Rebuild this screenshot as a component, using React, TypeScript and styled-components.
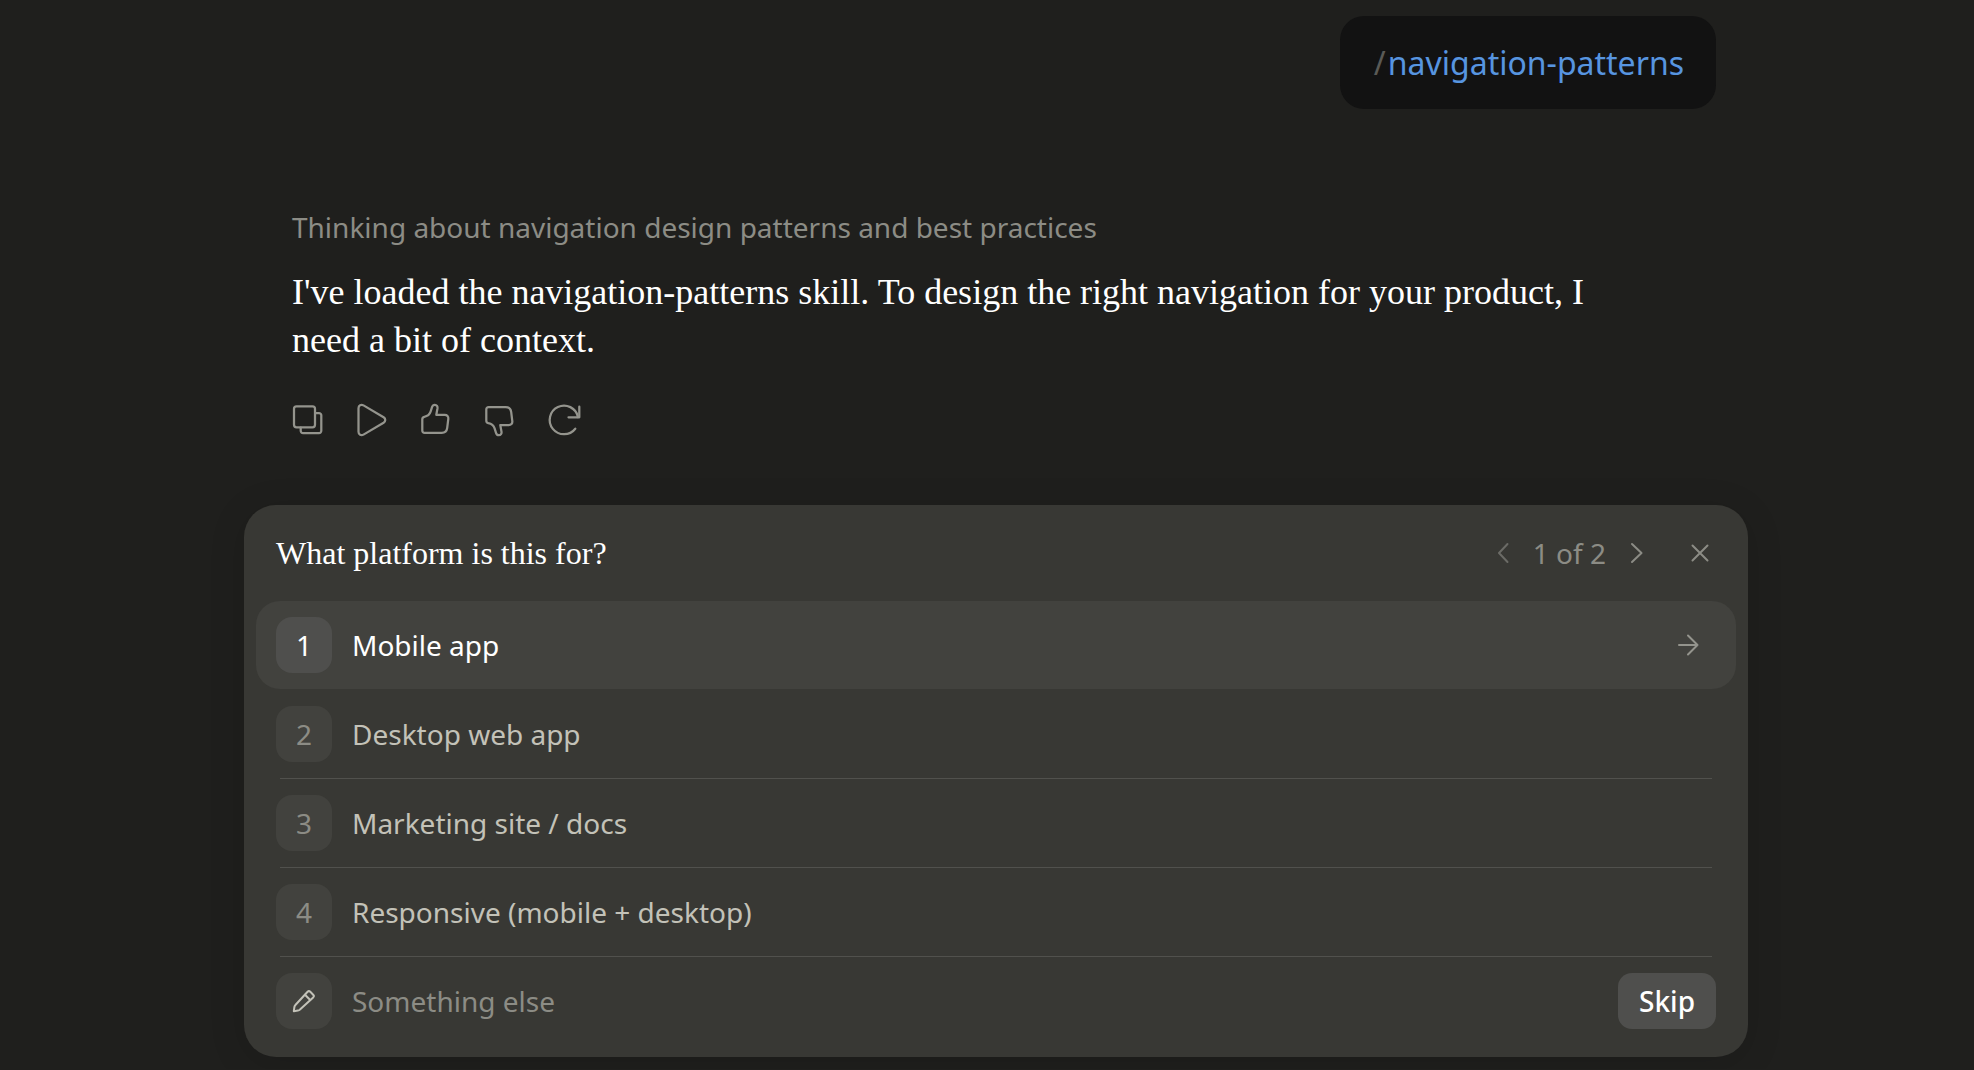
import React, { useState } from "react";
import styled, { createGlobalStyle, css } from "styled-components";

const color = {
  page: "#1f1f1d",
  bubble: "#121212",
  card: "#383834",
  raised: "#42423e",
  strong: "#4f4f4d",
  line: "#51514d",
  text: "#ffffff",
  label: "#c3c2b8",
  muted: "#8c8c85",
  faint: "#6b6b66",
  link: "#5795e0",
};

const sans = `"Noto Sans", "Liberation Sans", sans-serif`;
const serif = `"Liberation Serif", "Times New Roman", serif`;

const GlobalStyle = createGlobalStyle`
  *, *::before, *::after { box-sizing: border-box; }
  body {
    margin: 0;
    background: ${color.page};
    color: ${color.text};
    font: 28px/40px ${sans};
    overflow-x: hidden;
  }
  button, input { font: inherit; color: inherit; }
`;

const Page = styled.main`
  display: flex;
  justify-content: center;
  padding: 16px 0 12px 18px;
`;

const Column = styled.div`
  display: flex;
  flex-direction: column;
  width: 100%;
  max-width: 1504px;
`;

const Thread = styled.section`
  display: flex;
  flex-direction: column;
  padding: 0 32px 0 48px;
`;

const UserBubble = styled.div`
  display: flex;
  align-self: flex-end;
  gap: 2px;
  padding: 24px 32px 24px 34px;
  border-radius: 24px;
  background: ${color.bubble};
  font-size: 32px;
  line-height: 45px;
`;

const Slash = styled.span`
  color: #5a5a56;
`;

const Command = styled.a`
  color: ${color.link};
  text-decoration: none;
`;

const Reply = styled.article`
  display: flex;
  flex-direction: column;
  gap: 21px;
  margin-top: 98px;
`;

const Thinking = styled.p`
  margin: 0;
  color: ${color.muted};
`;

const ReplyText = styled.p`
  margin: 0;
  padding-right: 80px;
  font: 36px/48px ${serif};
`;

const Actions = styled.div`
  display: flex;
  gap: 32px;
  margin-top: 19px;
`;

const Glyph = styled.svg<{ $size: number }>`
  display: block;
  width: ${(p) => p.$size}px;
  height: ${(p) => p.$size}px;
  fill: none;
  stroke: currentColor;
  stroke-width: 2;
  stroke-linecap: round;
  stroke-linejoin: round;
  overflow: visible;
`;

const IconButton = styled.button<{ $dim?: boolean }>`
  display: flex;
  padding: 0;
  border: 0;
  background: none;
  color: ${(p) => (p.$dim ? color.faint : color.muted)};
  cursor: pointer;
`;

const ActionButton = styled(IconButton)`
  color: #94948d;

  ${Glyph} {
    stroke-width: 2.25;
  }
`;

const Card = styled.section`
  margin-top: 69px;
  padding: 0 12px 12px;
  border-radius: 32px;
  background: ${color.card};
  box-shadow: 0 6px 36px rgba(0, 0, 0, 0.13);
`;

const CardHeader = styled.header`
  display: flex;
  align-items: center;
  justify-content: space-between;
  height: 96px;
  padding: 0 20px;
`;

const Question = styled.h2`
  margin: 0;
  font: 32px/40px ${serif};
`;

const HeaderControls = styled.div`
  display: flex;
  align-items: center;
  gap: 36px;
`;

const Pager = styled.nav`
  display: flex;
  align-items: center;
  gap: 18px;
  color: ${color.muted};
`;

const Options = styled.ul`
  margin: 0;
  padding: 0;
  list-style: none;
`;

const Option = styled.li<{ $divided?: boolean }>`
  &:not(:last-child)::after {
    content: "";
    display: block;
    height: 1px;
    margin: 0 24px;
    background: ${(p) => (p.$divided ? color.line : "transparent")};
  }
`;

const rowLayout = css`
  display: flex;
  align-items: center;
  gap: 20px;
  width: 100%;
  height: 88px;
`;

const Choice = styled.button<{ $active: boolean }>`
  ${rowLayout}
  padding: 0 36px 0 20px;
  border: 0;
  border-radius: 24px;
  background: ${(p) => (p.$active ? color.raised : "transparent")};
  color: ${(p) => (p.$active ? color.text : color.label)};
  text-align: left;
  cursor: pointer;
`;

const CustomRow = styled.div`
  ${rowLayout}
  padding: 0 20px;
`;

const Badge = styled.span<{ $active?: boolean }>`
  display: flex;
  flex: none;
  align-items: center;
  justify-content: center;
  width: 56px;
  height: 56px;
  border-radius: 16px;
  background: ${(p) => (p.$active ? color.strong : color.raised)};
  color: ${(p) => (p.$active ? color.text : color.muted)};
`;

const PencilBadge = styled(Badge).attrs({ as: "label" })`
  color: ${color.label};
`;

const ChoiceText = styled.span`
  flex: 1;
`;

const Trailing = styled.span`
  color: #94948d;
`;

const CustomInput = styled.input`
  flex: 1;
  min-width: 0;
  height: 40px;
  padding: 0;
  border: 0;
  outline: 0;
  background: none;
  &::placeholder {
    color: ${color.muted};
    opacity: 1;
  }
`;

const SkipButton = styled.button`
  height: 56px;
  padding: 0 21px;
  border: 0;
  border-radius: 14px;
  background: ${color.strong};
  font-weight: 500;
  cursor: pointer;
`;

type IconProps = { size: number; children: React.ReactNode };

const Icon = ({ size, children }: IconProps) => (
  <Glyph $size={size} viewBox={`0 0 ${size} ${size}`} aria-hidden="true">
    {children}
  </Glyph>
);

const thumb =
  "M2.3 15.3c0-1.4.8-2.2 2-2.5 3.4-.6 5.4-2.4 6.3-5.1l1.5-4.8C12.6 1.4 13.5.8 14.8.8c2 0 3 1.6 2.7 3.5l-1.2 6.500h8.400c2.400 0 3.900 1.600 3.600 4l-1.100 9.100c-.4 3.200-2.400 5-5.500 5H4.600c-1.400 0-2.300-.9-2.300-2.300z";

const actions = [
  {
    name: "Copy",
    art: (
      <>
        <rect x="2" y="2.3" width="21" height="21" rx="2.5" />
        <path d="M23.500 9h3.500a2.300 2.300 0 0 1 2.300 2.300v15.500a2.300 2.300 0 0 1-2.300 2.300H11a2.300 2.300 0 0 1-2.300-2.300V23.500" />
      </>
    ),
  },
  {
    name: "Read aloud",
    art: (
      <path d="M2.500 4.200v23.600c0 3 2.600 4.200 5 2.800L27.600 18.700c2.200-1.400 2.200-4 0-5.400L7.500 1.400C5.100 0 2.500 1.200 2.500 4.200z" />
    ),
  },
  { name: "Good response", art: <path d={thumb} /> },
  {
    name: "Bad response",
    art: <path d={thumb} transform="translate(0 32) scale(1 -1)" />,
  },
  {
    name: "Retry",
    art: (
      <>
        <path d="M27.300 24.700A14.300 14.300 0 1 1 30 13" />
        <path d="M31.300 2.700v10.600H20.500" />
      </>
    ),
  },
];

const choices = [
  "Mobile app",
  "Desktop web app",
  "Marketing site / docs",
  "Responsive (mobile + desktop)",
];

export default function App() {
  const [active, setActive] = useState(0);

  return (
    <>
      <GlobalStyle />
      <Page>
        <Column>
          <Thread>
            <UserBubble>
              <Slash>/</Slash>
              <Command href="#navigation-patterns">navigation-patterns</Command>
            </UserBubble>
            <Reply>
              <Thinking>
                Thinking about navigation design patterns and best practices
              </Thinking>
              <ReplyText>
                I've loaded the navigation-patterns skill. To design the right
                navigation for your product, I need a bit of context.
              </ReplyText>
              <Actions>
                {actions.map((a) => (
                  <ActionButton key={a.name} aria-label={a.name}>
                    <Icon size={32}>{a.art}</Icon>
                  </ActionButton>
                ))}
              </Actions>
            </Reply>
          </Thread>

          <Card aria-labelledby="question">
            <CardHeader>
              <Question id="question">What platform is this for?</Question>
              <HeaderControls>
                <Pager aria-label="Questions">
                  <IconButton $dim aria-label="Previous question">
                    <Icon size={24}>
                      <path d="M16.500 3 8 12l8.500 9" />
                    </Icon>
                  </IconButton>
                  <span>1 of 2</span>
                  <IconButton aria-label="Next question">
                    <Icon size={24}>
                      <path d="M8 3l9.500 9L8 21" />
                    </Icon>
                  </IconButton>
                </Pager>
                <IconButton aria-label="Close">
                  <Icon size={32}>
                    <path d="M8.500 8.500l15 15M23.500 8.500l-15 15" />
                  </Icon>
                </IconButton>
              </HeaderControls>
            </CardHeader>

            <Options>
              {choices.map((text, i) => (
                <Option key={text} $divided={i !== active}>
                  <Choice $active={i === active} onClick={() => setActive(i)}>
                    <Badge $active={i === active}>{i + 1}</Badge>
                    <ChoiceText>{text}</ChoiceText>
                    {i === active && (
                      <Trailing>
                        <Icon size={24}>
                          <path d="M3 12h18.500M12 2.500l9.500 9.500-9.500 9.500" />
                        </Icon>
                      </Trailing>
                    )}
                  </Choice>
                </Option>
              ))}
              <Option>
                <CustomRow>
                  <PencilBadge htmlFor="custom-answer" aria-label="Your own answer">
                    <Icon size={24}>
                      <path d="M1.800 22.200l.6-4.200c.1-.8.5-1.500 1-2L15.600 2.800c.8-.8 1.900-.8 2.700 0l2.900 2.900c.8.8.8 1.900 0 2.700L8 20.600c-.5.500-1.200.9-2 1z" />
                      <path d="M13 5.800l5.200 5.200" />
                    </Icon>
                  </PencilBadge>
                  <CustomInput id="custom-answer" placeholder="Something else" />
                  <SkipButton>Skip</SkipButton>
                </CustomRow>
              </Option>
            </Options>
          </Card>
        </Column>
      </Page>
    </>
  );
}
